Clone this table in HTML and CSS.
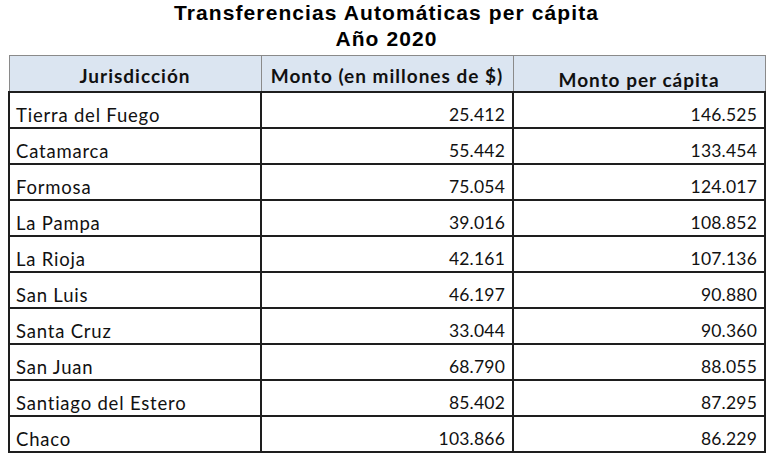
FILE: index.html
```html
<!DOCTYPE html>
<html lang="es">
<head>
<meta charset="utf-8">
<link rel="stylesheet" href="styles.css">
</head>
<body>
<div class="title">
  <div>Transferencias Automáticas per cápita</div>
  <div>Año 2020</div>
</div>
<table class="grid">
  <colgroup><col class="c"><col class="c"><col class="c"></colgroup>
  <thead>
    <tr>
      <th>Jurisdicción</th>
      <th>Monto (en millones de $)</th>
      <th class="low">Monto per cápita</th>
    </tr>
  </thead>
  <tbody>
    <tr><td>Tierra del Fuego</td><td class="num">25.412</td><td class="num">146.525</td></tr>
    <tr><td>Catamarca</td><td class="num">55.442</td><td class="num">133.454</td></tr>
    <tr><td>Formosa</td><td class="num">75.054</td><td class="num">124.017</td></tr>
    <tr><td>La Pampa</td><td class="num">39.016</td><td class="num">108.852</td></tr>
    <tr><td>La Rioja</td><td class="num">42.161</td><td class="num">107.136</td></tr>
    <tr><td>San Luis</td><td class="num">46.197</td><td class="num">90.880</td></tr>
    <tr><td>Santa Cruz</td><td class="num">33.044</td><td class="num">90.360</td></tr>
    <tr><td>San Juan</td><td class="num">68.790</td><td class="num">88.055</td></tr>
    <tr><td>Santiago del Estero</td><td class="num">85.402</td><td class="num">87.295</td></tr>
    <tr><td>Chaco</td><td class="num">103.866</td><td class="num">86.229</td></tr>
  </tbody>
</table>
</body>
</html>
```
FILE: styles.css
```css
html, body {
  margin: 0;
  padding: 0;
  background: #ffffff;
}

.title {
  width: 773px;
  text-align: center;
  font-family: "Liberation Sans", Arial, sans-serif;
  font-weight: bold;
  font-size: 21px;
  letter-spacing: 1.1px;
  line-height: 26px;
  color: #000;
  margin-top: 0;
}

.grid {
  margin: 3px 0 0 8px;
  border-collapse: collapse;
  table-layout: fixed;
  width: 757px;
  font-family: Lato, "Liberation Sans", sans-serif;
  font-size: 18.5px;
  letter-spacing: 0.8px;
  color: #111;
}

.c {
  width: 252px;
}

.grid th {
  background: #dbe5f1;
  border: 1px solid #8a8a8a;
  border-bottom: 2px solid #1e1e1e;
  height: 30px;
  padding: 0 4px 5px;
  font-size: 19px;
  letter-spacing: 1px;
  font-weight: bold;
  text-align: center;
  vertical-align: bottom;
  line-height: 20px;
}

.grid th.low {
  padding-bottom: 1px;
}

.grid td {
  border: 2px solid #1e1e1e;
  height: 32px;
  padding: 0 7px 2px 6px;
  vertical-align: bottom;
  line-height: 20px;
  white-space: nowrap;
}

.grid td.num {
  text-align: right;
  font-size: 17.5px;
  letter-spacing: 0.2px;
}
```
